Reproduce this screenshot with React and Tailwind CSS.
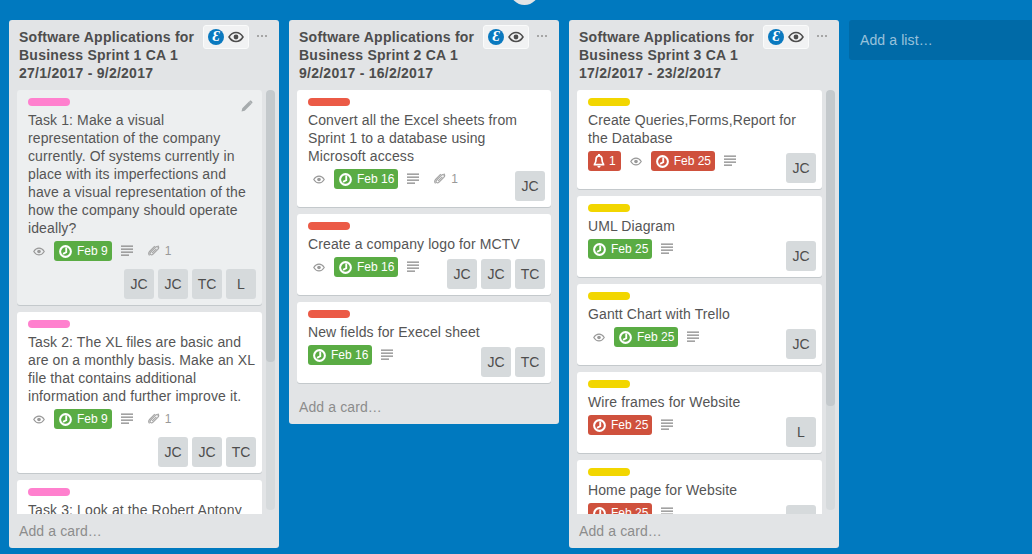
const PINK = 'bg-[#ff80ce]';
const RED = 'bg-[#eb5a46]';
const YELLOW = 'bg-[#f2d600]';

const EyeIcon = ({ className }) => (
  <svg className={className} viewBox="0 0 16 12" fill="none">
    <path d="M1 6c1.8-3 4.2-4.5 7-4.5S13.200 3 15 6c-1.800 3-4.200 4.500-7 4.500S2.800 9 1 6z" stroke="currentColor" strokeWidth="1.500" />
    <circle cx="8" cy="6" r="2.400" fill="currentColor" />
  </svg>
);

const ClockIcon = () => (
  <svg className="w-[13px] h-[13px] shrink-0" viewBox="0 0 14 14" fill="none">
    <circle cx="7" cy="7" r="5.800" stroke="white" strokeWidth="2.200" />
    <path d="M7.800 2.800V7.800L4.400 9.600" stroke="white" strokeWidth="2" />
  </svg>
);

const BellIcon = () => (
  <svg className="w-3 h-[14px] shrink-0" viewBox="0 0 12 14" fill="none">
    <path d="M6 1.800C8 1.800 9 3.400 9 5.600c0 2.300.5 3.500 1.500 4.600v.4h-9v-.4C2.500 9.100 3 7.900 3 5.600 3 3.400 4 1.800 6 1.800z" stroke="white" strokeWidth="1.700" />
    <rect x="5" y="0" width="2" height="2" fill="white" />
    <path d="M4.400 12.100h3.200C7.600 13.100 6.900 13.700 6 13.700s-1.600-.6-1.600-1.600z" fill="white" />
  </svg>
);

const DescIcon = () => (
  <svg className="w-3 h-3" viewBox="0 0 12 12" fill="#8c8c8c">
    <rect x="0" y="0.500" width="12" height="1.300" />
    <rect x="0" y="3.500" width="12" height="1.300" />
    <rect x="0" y="6.500" width="12" height="1.300" />
    <rect x="0" y="9.500" width="8" height="1.300" />
  </svg>
);

const ClipIcon = () => (
  <svg className="w-3 h-3" viewBox="0 0 12 12" fill="none" stroke="#a6a6a6" strokeWidth="1.200">
    <path d="M9.800 2.300a1.700 1.700 0 0 0-2.400 0L2.500 7.200a1.400 1.400 0 0 0 0 2.200c.7.700 1.600.7 2.300 0l5-5a2.800 2.800 0 0 0 0-3.800" />
    <path d="M6.800 1.200L1.600 6.400a3 3 0 0 0 0 4" />
    <path d="M8.400 3.800L4 8.200" />
  </svg>
);

const PencilIcon = () => (
  <svg className="w-3 h-3" viewBox="0 0 12 12" fill="#a6abad">
    <path d="M0.500 11.500l.8-3.200L8 1.600l2.400 2.400-6.700 6.700zM8.800.8c.4-.4 1-.4 1.400 0l1 1c.4.4.4 1 0 1.400l-.6.600-2.400-2.400z" />
  </svg>
);

const Eye = () => (
  <span className="w-[22px] h-5 mr-1 flex items-center justify-center text-[#999999]">
    <EyeIcon className="w-3 h-[9px]" />
  </span>
);

const Due = ({ date, color }) => (
  <span className={`h-5 pl-[5px] pr-1 mr-1 flex items-center gap-[5px] rounded-[3px] text-xs leading-5 text-white ${color}`}>
    <ClockIcon />
    {date}
  </span>
);

const Badges = ({ bell, eye, date, color, desc, clip }) => (
  <div className="flex items-start h-[26px]">
    {bell && (
      <span className="h-5 px-[5px] mr-1 flex items-center gap-1 rounded-[3px] text-xs text-white bg-[#cf513d]">
        <BellIcon />
        1
      </span>
    )}
    {eye && <Eye />}
    <Due date={date} color={color} />
    {desc && (
      <span className="w-[22px] h-5 mr-1 flex items-center justify-center">
        <DescIcon />
      </span>
    )}
    {clip && (
      <span className="h-5 px-[6px] flex items-center gap-[5px] text-xs text-[#999999]">
        <ClipIcon />
        1
      </span>
    )}
  </div>
);

const Members = ({ members }) => (
  <div className="flex gap-1 ml-auto mt-[2px]">
    {members.map((m, i) => (
      <span key={i} className="w-[30px] h-[30px] flex items-center justify-center rounded-[3px] bg-[#d6dadc] text-sm text-[#4d4d4d]">
        {m}
      </span>
    ))}
  </div>
);

const Card = ({ card }) => (
  <div className={`relative shrink-0 mb-[7px] rounded-[3px] pl-[11px] pr-[6px] pt-2 pb-[6px] shadow-[0_1px_0_#c4c9cc] ${card.hover ? 'bg-[#edeff0]' : 'bg-white'}`}>
    <div className={`w-[42px] h-2 rounded-[4px] ${card.label}`} />
    <p className="mt-[5px] text-sm leading-[18px] tracking-[0.11px] text-[#555555]">{card.title}</p>
    <div className="mt-1 flex flex-wrap">
      <Badges {...card} />
      <Members members={card.members} />
    </div>
    {card.hover && (
      <span className="absolute top-[10px] right-[9px]">
        <PencilIcon />
      </span>
    )}
  </div>
);

const List = ({ list }) => (
  <div className="w-[270px] shrink-0 rounded-[3px] bg-[#e2e4e6] flex flex-col" style={{ height: list.height }}>
    <div className="flex h-[70px] shrink-0 pl-[10px] pt-2">
      <h2 className="w-[184px] text-sm leading-[18px] font-bold text-[#4d4d4d] tracking-[0.25px]">
        Software Applications for<br />
        Business Sprint {list.num} CA 1<br />
        {list.dates}
      </h2>
      <div className="w-[46px] h-6 -mt-[3px] flex items-center gap-1 px-[4px] rounded-[3px] border border-[#fafbfb] bg-[#f1f2f3]">
        <span className="w-4 h-4 shrink-0 rounded-full bg-[#0a79bf] flex items-center justify-center text-white font-['Liberation_Serif',serif] italic font-bold text-[14px] leading-none">Ɛ</span>
        <EyeIcon className="w-4 h-3 text-[#4d4d4d] shrink-0" />
      </div>
      <div className="ml-2 mt-[7px] flex gap-[2px]">
        <span className="w-[2px] h-[2px] bg-[#a6a6a6]" />
        <span className="w-[2px] h-[2px] bg-[#a6a6a6]" />
        <span className="w-[2px] h-[2px] bg-[#a6a6a6]" />
      </div>
    </div>
    <div className={`flex-1 min-h-0 flex pl-2 ${list.thumb ? '' : 'pr-2'}`}>
      <div className={`overflow-hidden flex flex-col ${list.thumb ? 'w-[245px]' : 'flex-1'}`}>
        {list.cards.map((c, i) => <Card key={i} card={c} />)}
      </div>
      {list.thumb && (
        <div className="w-[9px] ml-1 mb-1 rounded-[4px] bg-[#d6dadc] overflow-hidden">
          <div className="rounded-[4px] bg-[#c4c9cc]" style={{ height: list.thumb }} />
        </div>
      )}
    </div>
    <div className="h-[34px] shrink-0 pl-[10px] text-sm leading-[34px] tracking-[0.11px] text-[#8c8c8c]">Add a card…</div>
  </div>
);

const lists = [
  {
    num: 1, dates: '27/1/2017 - 9/2/2017', height: 528, thumb: 272,
    cards: [
      { hover: true, label: PINK, eye: true, date: 'Feb 9', color: 'bg-[#5aac44]', desc: true, clip: true, members: ['JC', 'JC', 'TC', 'L'],
        title: 'Task 1: Make a visual representation of the company currently. Of systems currently in place with its imperfections and have a visual representation of the how the company should operate ideally?' },
      { label: PINK, eye: true, date: 'Feb 9', color: 'bg-[#5aac44]', desc: true, clip: true, members: ['JC', 'JC', 'TC'],
        title: 'Task 2: The XL files are basic and are on a monthly basis. Make an XL file that contains additional information and further improve it.' },
      { label: PINK, eye: true, date: 'Feb 9', color: 'bg-[#5aac44]', desc: true, members: ['JC'],
        title: 'Task 3: Look at the Robert Antony Pyramid' },
    ],
  },
  {
    num: 2, dates: '9/2/2017 - 16/2/2017', height: 404,
    cards: [
      { label: RED, eye: true, date: 'Feb 16', color: 'bg-[#5aac44]', desc: true, clip: true, members: ['JC'],
        title: 'Convert all the Excel sheets from Sprint 1 to a database using Microsoft access' },
      { label: RED, eye: true, date: 'Feb 16', color: 'bg-[#5aac44]', desc: true, members: ['JC', 'JC', 'TC'],
        title: 'Create a company logo for MCTV' },
      { label: RED, date: 'Feb 16', color: 'bg-[#5aac44]', desc: true, members: ['JC', 'TC'],
        title: 'New fields for Execel sheet' },
    ],
  },
  {
    num: 3, dates: '17/2/2017 - 23/2/2017', height: 528, thumb: 316,
    cards: [
      { label: YELLOW, bell: true, eye: true, date: 'Feb 25', color: 'bg-[#cf513d]', desc: true, members: ['JC'],
        title: 'Create Queries,Forms,Report for the Database' },
      { label: YELLOW, date: 'Feb 25', color: 'bg-[#5aac44]', desc: true, members: ['JC'], title: 'UML Diagram' },
      { label: YELLOW, eye: true, date: 'Feb 25', color: 'bg-[#5aac44]', desc: true, members: ['JC'], title: 'Gantt Chart with Trello' },
      { label: YELLOW, date: 'Feb 25', color: 'bg-[#cf513d]', desc: true, members: ['L'], title: 'Wire frames for Website' },
      { label: YELLOW, date: 'Feb 25', color: 'bg-[#cf513d]', desc: true, members: ['JC'], title: 'Home page for Website' },
    ],
  },
];

export default function App() {
  return (
    <div className="relative h-[554px] w-[1032px] overflow-hidden bg-[#0079bf] font-['Liberation_Sans',Arial,sans-serif]">
      <div className="absolute left-[510px] -top-6 w-[29px] h-[29px] rounded-full bg-[#e2e4e6]" />
      <div className="flex items-start gap-[10px] pl-[9px] pt-5">
        {lists.map((l) => <List key={l.num} list={l} />)}
        <div className="w-[270px] shrink-0 h-10 rounded-[3px] bg-[#006aa7] pl-[11px] text-sm leading-10 tracking-[0.11px] text-white/60">Add a list…</div>
      </div>
    </div>
  );
}
